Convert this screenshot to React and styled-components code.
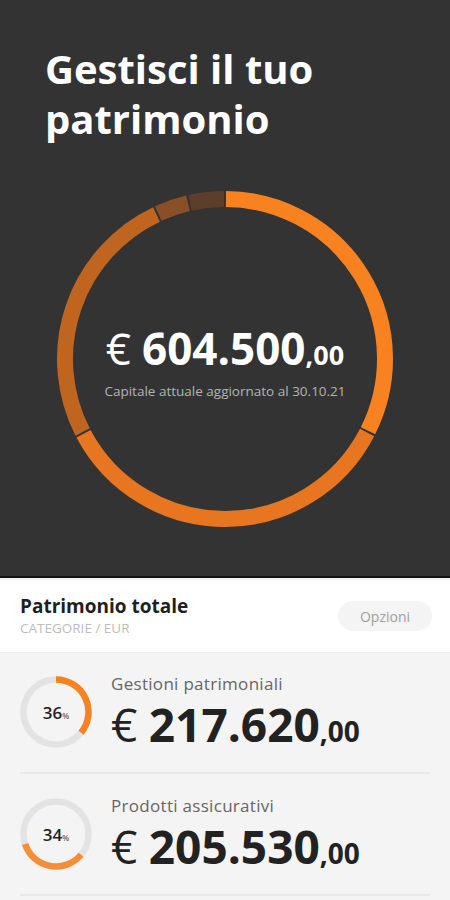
import React from 'react';
import styled, { createGlobalStyle } from 'styled-components';

const GlobalStyle = createGlobalStyle`
  html, body {
    margin: 0;
    padding: 0;
    background: #f4f4f4;
  }
  body {
    font-family: 'Open Sans', 'Noto Sans', sans-serif;
    -webkit-font-smoothing: antialiased;
  }
`;

const ORANGE = '#f7821f';

// main ring segments, angles in degrees clockwise from 12 o'clock
const segments = [
  { from: 0, to: 117, color: '#f8821f' },
  { from: 117, to: 242.5, color: '#e8751f' },
  { from: 242.5, to: 335, color: '#c0651f' },
  { from: 335, to: 347, color: '#8a4f27' },
  { from: 347, to: 360, color: '#5c3e2a' },
];

const categories = [
  { label: 'Gestioni patrimoniali', pct: 36, start: 0, amount: '217.620', color: ORANGE },
  { label: 'Prodotti assicurativi', pct: 34, start: 36, amount: '205.530', color: '#f78d35' },
];

const polar = (cx, cy, r, deg) => {
  const a = ((deg - 90) * Math.PI) / 180;
  return [cx + r * Math.cos(a), cy + r * Math.sin(a)];
};

const arcPath = (cx, cy, r, from, to) => {
  const [x1, y1] = polar(cx, cy, r, from);
  const [x2, y2] = polar(cx, cy, r, to);
  const large = to - from > 180 ? 1 : 0;
  return `M ${x1} ${y1} A ${r} ${r} 0 ${large} 1 ${x2} ${y2}`;
};

const Ring = () => (
  <svg width="340" height="340" viewBox="0 0 340 340">
    {segments.map((s, i) => (
      <path
        key={i}
        d={arcPath(170, 170, 160, s.from + 0.35, s.to - 0.35)}
        stroke={s.color}
        strokeWidth="16"
        fill="none"
      />
    ))}
  </svg>
);

const Donut = ({ pct, start, color }) => {
  const from = (start / 100) * 360;
  const to = ((start + pct) / 100) * 360;
  return (
    <svg width="72" height="72" viewBox="0 0 72 72">
      <circle cx="36" cy="36" r="32.5" stroke="#e3e3e3" strokeWidth="6.5" fill="none" />
      <path d={arcPath(36, 36, 32.5, from, to)} stroke={color} strokeWidth="6.5" fill="none" />
    </svg>
  );
};

export default function App() {
  return (
    <Page>
      <GlobalStyle />
      <Hero>
        <Title>Gestisci il tuo<br />patrimonio</Title>
        <RingWrap>
          <Ring />
          <RingCenter>
            <BigAmount>
              <Euro>€</Euro>
              <strong>604.500</strong>
              <Cents>,00</Cents>
            </BigAmount>
            <Caption>Capitale attuale aggiornato al 30.10.21</Caption>
          </RingCenter>
        </RingWrap>
      </Hero>

      <SectionHeader>
        <div>
          <SectionTitle>Patrimonio totale</SectionTitle>
          <SectionSub>CATEGORIE / EUR</SectionSub>
        </div>
        <OptionsButton>Opzioni</OptionsButton>
      </SectionHeader>

      <List>
        {categories.map((c) => (
          <Row key={c.label}>
            <DonutWrap>
              <Donut pct={c.pct} start={c.start} color={c.color} />
              <Pct>
                {c.pct}
                <small>%</small>
              </Pct>
            </DonutWrap>
            <RowInfo>
              <RowLabel>{c.label}</RowLabel>
              <RowAmount>
                <Euro>€</Euro>
                <strong>{c.amount}</strong>
                <Cents $small>,00</Cents>
              </RowAmount>
            </RowInfo>
          </Row>
        ))}
      </List>
    </Page>
  );
}

const Page = styled.div`
  width: 450px;
  height: 900px;
  background: #f4f4f4;
  overflow: hidden;
`;

const Hero = styled.div`
  background: #333333;
  height: 578px;
  box-sizing: border-box;
  border-bottom: 2px solid #141414;
  padding-top: 44px;
  display: flex;
  flex-direction: column;
`;

const Title = styled.h1`
  margin: 0 0 0 45px;
  color: #fff;
  font-size: 40px;
  line-height: 50px;
  font-weight: 700;
`;

const RingWrap = styled.div`
  display: grid;
  justify-items: center;
  align-items: center;
  margin-top: 45px;

  > * {
    grid-area: 1 / 1;
  }
`;

const RingCenter = styled.div`
  display: flex;
  flex-direction: column;
  align-items: center;
  margin-top: 4px;
`;

const BigAmount = styled.div`
  color: #fff;
  font-size: 44px;
  line-height: 50px;
  white-space: nowrap;

  strong {
    font-weight: 700;
  }
`;

const Euro = styled.span`
  font-weight: 400;
  margin-right: 0.25em;
`;

const Cents = styled.span`
  font-weight: 700;
  font-size: ${(p) => (p.$small ? '28px' : '27px')};
`;

const Caption = styled.div`
  color: #b3b3b3;
  font-size: 13.5px;
  line-height: 18px;
  margin-top: 2px;
`;

const SectionHeader = styled.div`
  background: #fff;
  height: 72px;
  margin-top: 2px;
  padding: 0 18px 0 20px;
  display: flex;
  align-items: center;
  justify-content: space-between;
  box-shadow: 0 1px 0 #ececec;
`;

const SectionTitle = styled.div`
  font-size: 19px;
  font-weight: 700;
  color: #1f1f1f;
  line-height: 24px;
`;

const SectionSub = styled.div`
  font-size: 13.5px;
  color: #bdbdbd;
  line-height: 20px;
`;

const OptionsButton = styled.button`
  border: none;
  background: #f4f4f4;
  color: #a0a0a0;
  font-family: inherit;
  font-size: 14px;
  width: 94px;
  height: 30px;
  border-radius: 15px;
`;

const List = styled.div`
  padding: 0 20px;
`;

const Row = styled.div`
  display: flex;
  align-items: center;
  gap: 19px;
  height: 120px;
  border-bottom: 2px solid #e8e8e8;
`;

const DonutWrap = styled.div`
  display: grid;
  place-items: center;

  > * {
    grid-area: 1 / 1;
  }
`;

const Pct = styled.div`
  font-size: 17px;
  font-weight: 600;
  color: #222;

  small {
    font-size: 8px;
    color: #666;
  }
`;

const RowInfo = styled.div`
  display: flex;
  flex-direction: column;
  gap: 4px;
  margin-top: 6px;
`;

const RowLabel = styled.div`
  font-size: 17px;
  letter-spacing: 0.3px;
  color: #666;
  line-height: 20px;
`;

const RowAmount = styled.div`
  font-size: 46px;
  line-height: 52px;
  color: #222;
  white-space: nowrap;

  strong {
    font-weight: 700;
  }
`;
